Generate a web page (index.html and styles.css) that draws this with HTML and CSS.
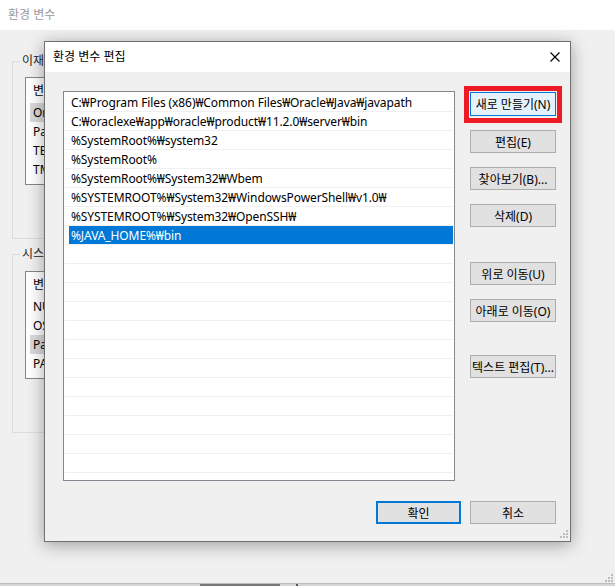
FILE: index.html
```html
<!DOCTYPE html>
<html lang="ko">
<head>
<meta charset="utf-8">
<title>환경 변수 편집</title>
<link rel="stylesheet" href="styles.css">
</head>
<body>
<div class="desktop">
  <div class="bgwin">
    <div class="bg-title">환경 변수</div>
    <div class="bg-body">
      <fieldset class="group g1">
        <legend>이재원에 대한 사용자 변수(U)</legend>
        <div class="vlist">
          <div class="vhead">변수</div>
          <div class="vrow hl">OneDrive</div>
          <div class="vrow">Path</div>
          <div class="vrow">TEMP</div>
          <div class="vrow">TMP</div>
        </div>
      </fieldset>
      <fieldset class="group g2">
        <legend>시스템 변수(S)</legend>
        <div class="vlist">
          <div class="vhead">변수</div>
          <div class="vrow">NUMBER_OF_PROCESSORS</div>
          <div class="vrow">OS</div>
          <div class="vrow hl">Path</div>
          <div class="vrow">PATHEXT</div>
        </div>
      </fieldset>
    </div>
    <svg class="grip bg-grip" width="8" height="8" viewBox="0 0 8 8"><g fill="#bdbdbd"><rect x="6" y="0" width="2" height="2"/><rect x="3" y="3" width="2" height="2"/><rect x="6" y="3" width="2" height="2"/><rect x="0" y="6" width="2" height="2"/><rect x="3" y="6" width="2" height="2"/><rect x="6" y="6" width="2" height="2"/></g></svg>
  </div>
  <div class="strip"><span class="thumb"></span><span class="tick"></span></div>

  <div class="dialog">
    <div class="d-title">
      <span class="d-title-text">환경 변수 편집</span>
      <svg class="close" width="10" height="10" viewBox="0 0 10 10"><path d="M0.5 0.5 L9.5 9.5 M9.5 0.5 L0.5 9.5" stroke="#000" stroke-width="1.1" fill="none"/></svg>
    </div>
    <div class="d-body">
      <div class="d-main">
        <div class="plist">
          <div class="prow"><span class="ptext">C:₩Program Files (x86)₩Common Files₩Oracle₩Java₩javapath</span></div>
          <div class="prow"><span class="ptext">C:₩oraclexe₩app₩oracle₩product₩11.2.0₩server₩bin</span></div>
          <div class="prow"><span class="ptext">%SystemRoot%₩system32</span></div>
          <div class="prow"><span class="ptext">%SystemRoot%</span></div>
          <div class="prow"><span class="ptext">%SystemRoot%₩System32₩Wbem</span></div>
          <div class="prow"><span class="ptext">%SYSTEMROOT%₩System32₩WindowsPowerShell₩v1.0₩</span></div>
          <div class="prow"><span class="ptext">%SYSTEMROOT%₩System32₩OpenSSH₩</span></div>
          <div class="prow sel"><span class="ptext">%JAVA_HOME%₩bin</span></div>
          <div class="prow"></div>
          <div class="prow"></div>
          <div class="prow"></div>
          <div class="prow"></div>
          <div class="prow"></div>
          <div class="prow"></div>
          <div class="prow"></div>
          <div class="prow"></div>
          <div class="prow"></div>
          <div class="prow"></div>
          <div class="prow"></div>
          <div class="prow"></div>
          <div class="prow"></div>
        </div>
        <div class="btncol">
          <button class="btn focus">새로 만들기(N)<span class="mark"></span></button>
          <button class="btn">편집(E)</button>
          <button class="btn">찾아보기(B)...</button>
          <button class="btn">삭제(D)</button>
          <button class="btn sp1">위로 이동(U)</button>
          <button class="btn">아래로 이동(O)</button>
          <button class="btn sp2">텍스트 편집(T)...</button>
        </div>
      </div>
      <div class="d-foot">
        <button class="btn ok">확인</button>
        <button class="btn cancel">취소</button>
      </div>
    </div>
    <svg class="grip d-grip" width="8" height="8" viewBox="0 0 8 8"><g fill="#bdbdbd"><rect x="6" y="0" width="2" height="2"/><rect x="3" y="3" width="2" height="2"/><rect x="6" y="3" width="2" height="2"/><rect x="0" y="6" width="2" height="2"/><rect x="3" y="6" width="2" height="2"/><rect x="6" y="6" width="2" height="2"/></g></svg>
  </div>
</div>
</body>
</html>
```
FILE: styles.css
```css
* { box-sizing: border-box; }
html, body {
  margin: 0;
  padding: 0;
}
body {
  width: 615px;
  height: 586px;
  overflow: hidden;
  background: #f0f0f0;
  font-family: "Noto Sans", "Noto Sans CJK KR", sans-serif;
  font-size: 12px;
  color: #000;
}
.desktop {
  position: relative;
  width: 615px;
  height: 586px;
  overflow: hidden;
}
.bgwin {
  position: relative;
  height: 583px;
  background: #f0f0f0;
}
.bg-title {
  height: 30px;
  line-height: 30px;
  padding-left: 8px;
  background: #fff;
  color: #9a9a9a;
}
.bg-body {
  display: flex;
  flex-direction: column;
  padding-left: 12px;
}
.group {
  width: 545px;
  margin: 0;
  padding: 0 0 53px 0;
  border: 1px solid #dcdcdc;
  min-width: 0;
}
.group legend {
  line-height: 16px;
  padding: 0 2px;
  margin-left: 7px;
  color: #1e1e1e;
}
.g1 { margin-top: 23px; }
.g2 { margin-top: 7px; }
.vlist {
  margin: 8px 0 0 12px;
  width: 500px;
  height: 108px;
  border: 1px solid #828790;
  background: #fff;
}
.g2 .vlist { margin-top: 9px; }
.vhead {
  height: 25px;
  line-height: 25px;
  padding-left: 7px;
}
.vrow {
  height: 19px;
  line-height: 19px;
  margin-left: 4px;
  padding-left: 3px;
}
.vrow.hl { background: #d9d9d9; }
.grip { position: absolute; display: block; }
.bg-grip { right: 2px; bottom: 1px; }

.strip {
  display: flex;
  height: 3px;
  border-top: 1px solid #bdbdbd;
  background: #d6d6d6;
}
.thumb {
  margin-left: 200px;
  width: 80px;
  background: #777;
}
.tick {
  margin-left: 16px;
  width: 2px;
  background: #555;
}

.dialog {
  position: absolute;
  left: 44px;
  top: 41px;
  width: 527px;
  height: 501px;
  border: 1px solid #707070;
  background: #f0f0f0;
  box-shadow: 0 3px 16px rgba(0, 0, 0, 0.35);
  display: flex;
  flex-direction: column;
}
.d-title {
  height: 30px;
  background: #fff;
  display: flex;
  align-items: center;
  justify-content: space-between;
  padding-left: 8px;
  padding-right: 10px;
}
.d-title-text { line-height: 30px; }
.close { display: block; }
.d-body {
  flex: 1;
  padding: 19px 14px 0 18px;
  display: flex;
  flex-direction: column;
}
.d-main {
  display: flex;
  gap: 15px;
}
.plist {
  width: 392px;
  height: 390px;
  border: 1px solid #828790;
  background: #fff;
  padding-top: 1px;
  overflow: hidden;
}
.prow {
  height: 19px;
  margin: 0 1px;
  padding-left: 4px;
  border-bottom: 1px solid #f0f0f0;
}
.ptext {
  display: block;
  height: 18px;
  line-height: 19px;
  padding-left: 2px;
  white-space: nowrap;
  letter-spacing: -0.1px;
}
.prow.sel .ptext {
  background: #0078d7;
  color: #fff;
}
.btncol {
  display: flex;
  flex-direction: column;
  gap: 14px;
  padding-top: 1px;
  width: 86px;
}
.btn {
  position: relative;
  width: 86px;
  height: 23px;
  padding: 0;
  margin: 0;
  border: 1px solid #adadad;
  background: #e1e1e1;
  font-family: inherit;
  font-size: 12px;
  color: #000;
  white-space: nowrap;
  display: flex;
  align-items: center;
  justify-content: center;
  overflow: visible;
}
.btn.focus {
  height: 24px;
  border-color: #0078d7;
  background: #e5f1fb;
}
.btn.sp1 { margin-top: 21px; }
.btn.sp2 { margin-top: 19px; }
.mark {
  position: absolute;
  left: -7px;
  right: -7px;
  top: -7px;
  bottom: -8px;
  border: 5px solid #ed1c24;
}
.d-foot {
  margin-top: 20px;
  display: flex;
  justify-content: flex-end;
  gap: 9px;
}
.btn.ok {
  width: 85px;
  border: 2px solid #0078d7;
}
.d-grip { right: 2px; bottom: 3px; }
```
